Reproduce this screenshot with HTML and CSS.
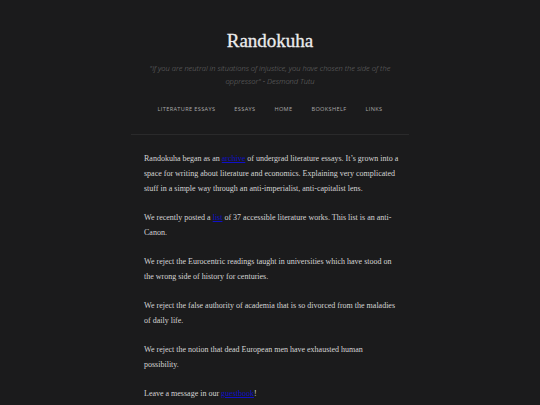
FILE: index.html
```html
<!DOCTYPE html>
<html>
<head>
<meta charset="utf-8">
<link rel="stylesheet" href="styles.css">
</head>
<body>
<div class="page">
  <header class="header">
    <h1 class="title">Randokuha</h1>
    <p class="quote">"If you are neutral in situations of injustice, you have chosen the side of the oppressor" - Desmond Tutu</p>
    <nav class="nav">
      <a href="#">Literature Essays</a>
      <a href="#">Essays</a>
      <a href="#">Home</a>
      <a href="#">Bookshelf</a>
      <a href="#">Links</a>
    </nav>
  </header>
  <main class="content">
    <p>Randokuha began as an <a href="#">archive</a> of undergrad literature essays. It’s grown into a space for writing about literature and economics. Explaining very complicated stuff in a simple way through an anti-imperialist, anti-capitalist lens.</p>
    <p>We recently posted a <a href="#">list</a> of 37 accessible literature works. This list is an anti-Canon.</p>
    <p>We reject the Eurocentric readings taught in universities which have stood on the wrong side of history for centuries.</p>
    <p>We reject the false authority of academia that is so divorced from the maladies of daily life.</p>
    <p class="narrow">We reject the notion that dead European men have exhausted human possibility.</p>
    <p>Leave a message in our <a href="#">guestbook</a>!</p>
  </main>
</div>
</body>
</html>
```
FILE: styles.css
```css
html, body {
  margin: 0;
  padding: 0;
  background: #1b1b1c;
}
body {
  font-family: "Liberation Serif", serif;
  color: #d4d4d4;
}
.page {
  width: 278px;
  margin: 0 auto;
  padding-top: 28px;
}
.header {
  text-align: center;
  border-bottom: 1px solid #2a2a2b;
  padding-bottom: 20px;
}
.title {
  margin: 0;
  font-size: 19px;
  font-weight: normal;
  color: #ececec;
  line-height: 26px;
  -webkit-text-stroke: 0.3px #ececec;
}
.quote {
  margin: 8px 0 0;
  padding: 0 12px;
  font-family: "Open Sans", sans-serif;
  font-style: italic;
  font-weight: 300;
  font-size: 7.5px;
  line-height: 13px;
  color: #707070;
}
.nav {
  margin-top: 16px;
  display: flex;
  justify-content: center;
  gap: 19px;
}
.nav a {
  font-family: "Open Sans", sans-serif;
  font-size: 5.6px;
  text-transform: uppercase;
  letter-spacing: 0.35px;
  color: #a8a8a8;
  text-decoration: none;
  line-height: 10px;
}
.content {
  padding: 16px 9px 0 13px;
  font-size: 8px;
  line-height: 15px;
}
.content p {
  margin: 0 0 14px;
}
.content p.narrow {
  max-width: 245px;
}
.content a {
  color: #1010c8;
}
```
